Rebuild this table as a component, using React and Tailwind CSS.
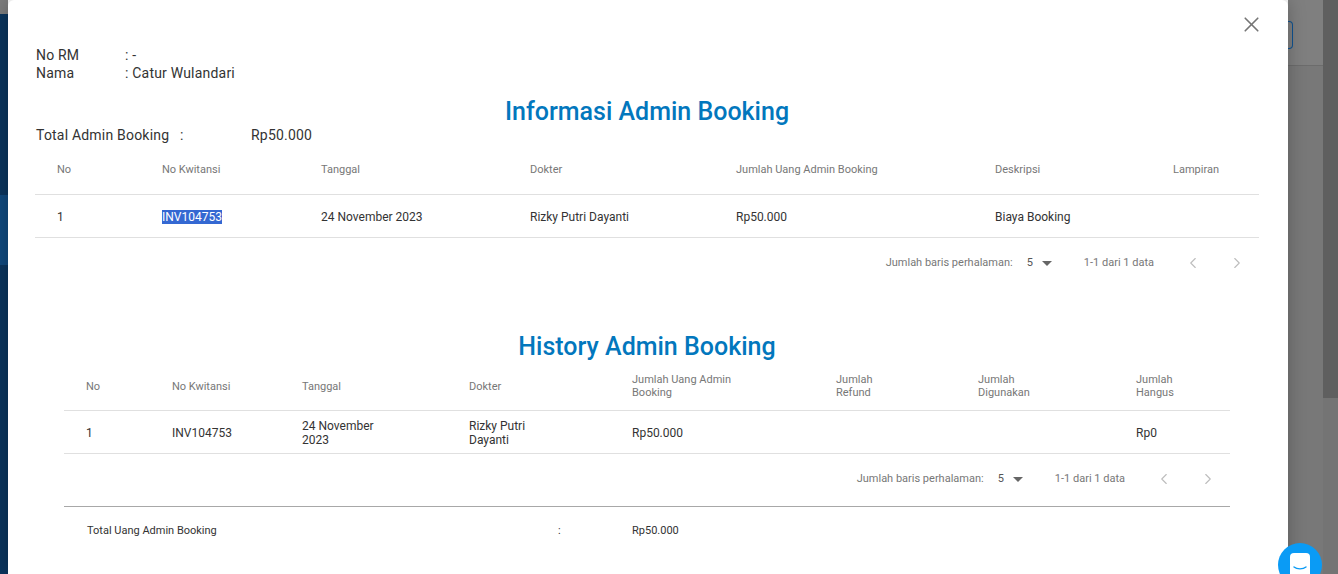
import React from 'react';
import { X, ChevronLeft, ChevronRight } from 'lucide-react';

const font = { fontFamily: 'Roboto, "Open Sans", Arial, sans-serif' };

function Pagination() {
  return (
    <div className="h-[50px] flex items-center justify-end text-[11px] text-[#777]">
      <span>Jumlah baris perhalaman:</span>
      <div className="ml-[14px] flex items-center gap-[9px] text-[#555]">
        <span>5</span>
        <svg width="10" height="5" viewBox="0 0 10 5"><path d="M0 0h10L5 5z" fill="#666" /></svg>
      </div>
      <span className="ml-[32px]">1-1 dari 1 data</span>
      <div className="ml-[17px] flex items-center">
        <button className="w-[44px] h-[40px] flex items-center justify-center text-[#bdbdbd]">
          <ChevronLeft size={18} strokeWidth={1.5} />
        </button>
        <button className="w-[44px] h-[40px] flex items-center justify-center text-[#bdbdbd]">
          <ChevronRight size={18} strokeWidth={1.5} />
        </button>
      </div>
    </div>
  );
}

function InfoTable() {
  const head = ['No', 'No Kwitansi', 'Tanggal', 'Dokter', 'Jumlah Uang Admin Booking', 'Deskripsi', 'Lampiran'];
  const cols = 'grid grid-cols-[105px_159px_209px_206px_259px_178px_1fr] pl-[22px]';
  return (
    <div className="mt-[1px]">
      <div className={`${cols} h-[50px] pt-[2px] items-center border-b border-[#e0e0e0] text-[11px] text-[#777]`}>
        {head.map((h) => (
          <div key={h}>{h}</div>
        ))}
      </div>
      <div className={`${cols} h-[43px] pt-[1px] items-center border-b border-[#e0e0e0] text-[12px] text-[#333]`}>
        <div>1</div>
        <div>
          <span className="bg-[#3468d2] text-white">INV104753</span>
        </div>
        <div>24 November 2023</div>
        <div>Rizky Putri Dayanti</div>
        <div>Rp50.000</div>
        <div>Biaya Booking</div>
        <div></div>
      </div>
      <Pagination />
    </div>
  );
}

function HistoryTable() {
  const cols = 'grid grid-cols-[86px_130px_167px_163px_204px_142px_158px_1fr] pl-[22px]';
  return (
    <div className="mx-[29px]">
      <div className={`${cols} h-[50px] pt-[1px] items-center border-b border-[#e0e0e0] text-[11px] leading-[13px] text-[#777]`}>
        <div>No</div>
        <div>No Kwitansi</div>
        <div>Tanggal</div>
        <div>Dokter</div>
        <div className="max-w-[105px]">Jumlah Uang Admin Booking</div>
        <div className="max-w-[50px]">Jumlah Refund</div>
        <div className="max-w-[60px]">Jumlah Digunakan</div>
        <div className="max-w-[50px]">Jumlah Hangus</div>
      </div>
      <div className={`${cols} h-[43px] pt-[1px] items-center border-b border-[#e0e0e0] text-[12px] leading-[14px] text-[#333]`}>
        <div>1</div>
        <div>INV104753</div>
        <div className="max-w-[80px]">24 November 2023</div>
        <div className="max-w-[70px]">Rizky Putri Dayanti</div>
        <div>Rp50.000</div>
        <div></div>
        <div></div>
        <div>Rp0</div>
      </div>
      <Pagination />
      <div className="mt-[2px] border-t border-[#a8a8a8] h-[50px] grid grid-cols-[471px_74px_1fr] pl-[23px] items-center text-[11px] text-[#333]">
        <div>Total Uang Admin Booking</div>
        <div>:</div>
        <div>Rp50.000</div>
      </div>
    </div>
  );
}

export default function App() {
  return (
    <div className="relative h-[574px] w-full overflow-hidden flex" style={font}>
      {/* sidebar edge behind the overlay */}
      <div className="w-[8px] flex flex-col bg-[#0b355d]">
        <div className="h-[14px] bg-[#7d7d7d]" />
        <div className="h-[181px]" />
        <div className="h-[70px] bg-[#10497d]" />
        <div className="flex-1" />
      </div>

      {/* modal */}
      <div className="relative w-[1280px] shrink-0 bg-white rounded-t-md shadow-[0_0_18px_rgba(0,0,0,0.25)] pt-[46px] pl-[27px] pr-[29px]">
        <button className="absolute top-[4px] right-[17px] w-[40px] h-[40px] flex items-center justify-center text-[#757575]">
          <X size={25} strokeWidth={1.6} />
        </button>

        <div className="pl-[1px] text-[14px] leading-[18px] tracking-[0.2px] text-[#333]">
          <div className="grid grid-cols-[89px_1fr]">
            <span>No RM</span>
            <span>: -</span>
          </div>
          <div className="grid grid-cols-[89px_1fr]">
            <span>Nama</span>
            <span>: Catur Wulandari</span>
          </div>
        </div>

        <h2 className="mt-[15px] mb-[-1px] text-center text-[25px] leading-[30px] font-medium text-[#0277bd]">
          Informasi Admin Booking
        </h2>

        <div className="pl-[1px] grid grid-cols-[144px_71px_1fr] text-[14px] leading-[18px] tracking-[0.2px] text-[#333]">
          <span>Total Admin Booking</span>
          <span>:</span>
          <span>Rp50.000</span>
        </div>

        <InfoTable />

        <h2 className="mt-[44px] mb-[-1px] text-center text-[25px] leading-[30px] font-medium text-[#0277bd]">
          History Admin Booking
        </h2>

        <HistoryTable />
      </div>

      {/* page behind overlay */}
      <div className="flex-1 flex flex-col bg-[#787878]">
        <div className="h-[66px] bg-[#7f7f7f] border-b border-[#6c6c6c] pt-[21px]">
          <div className="w-[5px] h-[28px] border-y border-r border-[#0f5290] rounded-r-sm" />
        </div>
        <div className="flex-1" />
      </div>

      {/* scrollbar */}
      <div className="w-[15px] flex flex-col bg-[#747474]">
        <div className="h-[398px] bg-[#5f5f5f]" />
      </div>

      {/* chat launcher */}
      <div className="absolute left-[1278px] top-[543px] w-[44px] h-[44px] rounded-full bg-[#0a9bf5] flex justify-center pt-[10px]">
        <svg width="20" height="26" viewBox="0 0 20 26">
          <rect x="0" y="0" width="20" height="26" rx="4" fill="#fff" />
          <path d="M4 14c3 2.5 9 2.5 12 0" stroke="#0a9bf5" strokeWidth="1.4" fill="none" strokeLinecap="round" />
        </svg>
      </div>
    </div>
  );
}
